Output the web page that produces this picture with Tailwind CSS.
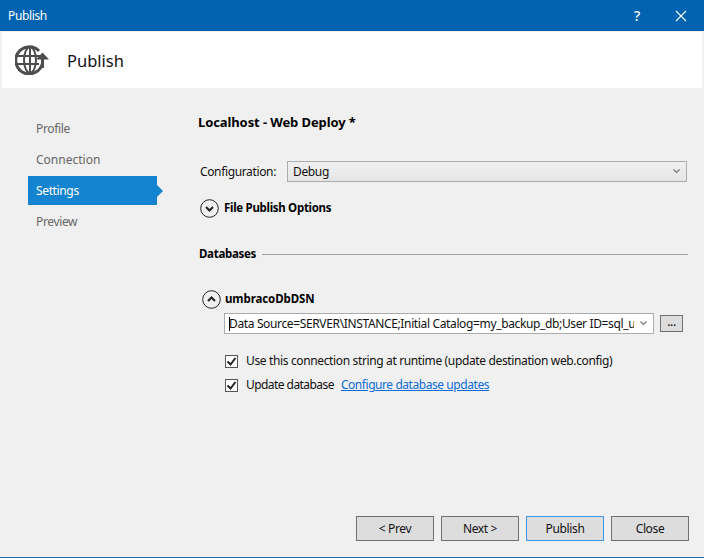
<!DOCTYPE html>
<html lang="en">
<head>
<meta charset="UTF-8">
<title>Publish</title>
<script src="https://cdn.jsdelivr.net/npm/@tailwindcss/browser@4"></script>
</head>
<body class="m-0">
<div class="w-[704px] h-[558px] flex flex-col bg-[#f0f0f0] overflow-hidden border-b border-[#1c6aa8] font-['Noto_Sans',sans-serif] text-[12px] tracking-[-0.36px] text-[#111]">
  <!-- title bar -->
  <div class="h-[31px] shrink-0 bg-[#0063b1] flex items-center text-white pl-2">
    <span class="flex-1">Publish</span>
    <span class="w-[12px] text-[14px] font-medium text-center mr-[32px]">?</span>
    <svg class="w-[12px] h-[12px] mr-[17px]" viewBox="0 0 12 12" fill="none" stroke="#fff" stroke-width="1.1"><path d="M1 1l10 10M11 1L1 11"/></svg>
  </div>
  <!-- header -->
  <div class="h-[56px] shrink-0 mt-[1px] mx-[2px] bg-white flex items-center pl-[13px]">
    <svg class="w-[34px] h-[30px]" viewBox="0 0 34 30" fill="none" stroke="#4d4d4d" stroke-width="2">
      <path d="M24 6A13.500 13.500 0 1 0 27.500 18" stroke-width="3"/>
      <ellipse cx="15" cy="15" rx="6" ry="13"/>
      <path d="M2 11h24M2 19h22M15 2v26" stroke-width="2"/>
      <path d="M27.500 23v-10" stroke-width="3"/>
      <path d="M21 14.500l6.500-7 6.500 7z" fill="#4d4d4d" stroke="none"/>
    </svg>
    <span class="ml-[18px] mt-[2px] text-[16.5px] tracking-normal text-[#111]">Publish</span>
  </div>
  <!-- body -->
  <div class="flex-1 flex">
    <nav class="w-[199px] shrink-0 pt-[25px] pl-[28px] text-[#666]">
      <div class="h-[31px] flex items-center pl-[8px]">Profile</div>
      <div class="h-[31px] flex items-center pl-[8px] tracking-normal">Connection</div>
      <div class="relative w-[129px] h-[29px] my-[1px] flex items-center pl-[8px] bg-[#1484d1] text-white">
        Settings
        <div class="absolute left-full top-[9px] border-y-[6px] border-l-[6px] border-y-transparent border-l-[#1484d1]"></div>
      </div>
      <div class="h-[31px] flex items-center pl-[8px]">Preview</div>
    </nav>
    <main class="flex-1 flex flex-col pr-[16px]">
      <div class="mt-[26px] -ml-px h-[18px] flex items-center font-bold text-[13px] tracking-[-0.1px] text-black">Localhost - Web Deploy *</div>
      <div class="mt-[29px] mr-px flex items-center h-[21px] pl-[1px]">
        <span class="w-[87px]">Configuration:</span>
        <div class="flex-1 h-[21px] border border-[#acacac] bg-gradient-to-b from-[#f0f0f0] to-[#e5e5e5] flex items-center pl-[5px] pr-[6px]">
          <span class="flex-1">Debug</span>
          <svg class="w-[7px] h-[5px]" viewBox="0 0 7 5" fill="none" stroke="#777" stroke-width="1.2"><path d="M.5 .5L3.500 3.500 6.500 .5"/></svg>
        </div>
      </div>
      <div class="mt-[16px] flex items-center h-[20px] pl-[1px] gap-[5px]">
        <svg class="w-[19px] h-[19px]" viewBox="0 0 19 19" fill="none" stroke="#222"><circle cx="9.500" cy="9.500" r="8.800"/><path d="M6 8l3.500 3.500L13 8" stroke-width="2"/></svg>
        <span class="font-bold text-[11.5px] tracking-[-0.3px] text-black">File Publish Options</span>
      </div>
      <div class="mt-[27px] flex items-center h-[18px] gap-[6px]">
        <span class="font-bold text-[11.5px] tracking-[-0.3px] text-black">Databases</span>
        <div class="flex-1 h-px bg-[#a0a0a0]"></div>
      </div>
      <div class="mt-[26px] ml-[3px] flex items-center h-[20px] gap-[4px]">
        <svg class="w-[19px] h-[19px]" viewBox="0 0 19 19" fill="none" stroke="#222"><circle cx="9.500" cy="9.500" r="8.800"/><path d="M6 11l3.500-3.500L13 11" stroke-width="2"/></svg>
        <span class="font-bold text-[11.5px] tracking-[-0.1px] text-black">umbracoDbDSN</span>
      </div>
      <div class="mt-[4px] ml-[25px] flex items-center">
        <div class="relative w-[430px] h-[21px] border border-[#acacac] bg-white flex items-center pl-[4px] pr-[6px]">
          <div class="absolute left-[4px] top-[3px] w-px h-[14px] bg-black"></div>
          <span class="w-[405px] overflow-hidden whitespace-nowrap">Data Source=SERVER\INSTANCE;Initial Catalog=my_backup_db;User ID=sql_user</span>
          <svg class="w-[7px] h-[5px] ml-auto" viewBox="0 0 7 5" fill="none" stroke="#777" stroke-width="1.2"><path d="M.5 .5L3.500 3.500 6.500 .5"/></svg>
        </div>
        <div class="ml-[6px] w-[23px] h-[17px] border border-[#707070] bg-[#dddddd] flex items-center justify-center leading-none pb-[3px] text-black">...</div>
      </div>
      <div class="mt-[18px] ml-[26px] flex items-center h-[18px] gap-[8px]">
        <svg class="w-[13px] h-[13px] shrink-0" viewBox="0 0 13 13"><rect x=".5" y=".5" width="12" height="12" fill="#fff" stroke="#555"/><path d="M2.500 6.500l3 3 5-6.500" fill="none" stroke="#222" stroke-width="2"/></svg>
        <span>Use this connection string at runtime (update destination web.config)</span>
      </div>
      <div class="mt-[6px] ml-[26px] flex items-center h-[18px] gap-[8px]">
        <svg class="w-[13px] h-[13px] shrink-0" viewBox="0 0 13 13"><rect x=".5" y=".5" width="12" height="12" fill="#fff" stroke="#555"/><path d="M2.500 6.500l3 3 5-6.500" fill="none" stroke="#222" stroke-width="2"/></svg>
        <span class="tracking-[-0.56px]">Update database</span>
        <a class="underline text-[#0f6cd6] -ml-[1px] tracking-[-0.44px]">Configure database updates</a>
      </div>
      <div class="mt-auto mb-[16px] flex justify-end gap-[7px] -mr-[1px]">
        <button class="w-[78px] h-[25px] border border-[#707070] bg-[#dddddd]">&lt; Prev</button>
        <button class="w-[78px] h-[25px] border border-[#707070] bg-[#dddddd]">Next &gt;</button>
        <button class="w-[78px] h-[25px] border border-[#3b94e8] bg-[#dddddd]">Publish</button>
        <button class="w-[78px] h-[25px] border border-[#707070] bg-[#dddddd]">Close</button>
      </div>
    </main>
  </div>
</div>
</body>
</html>
